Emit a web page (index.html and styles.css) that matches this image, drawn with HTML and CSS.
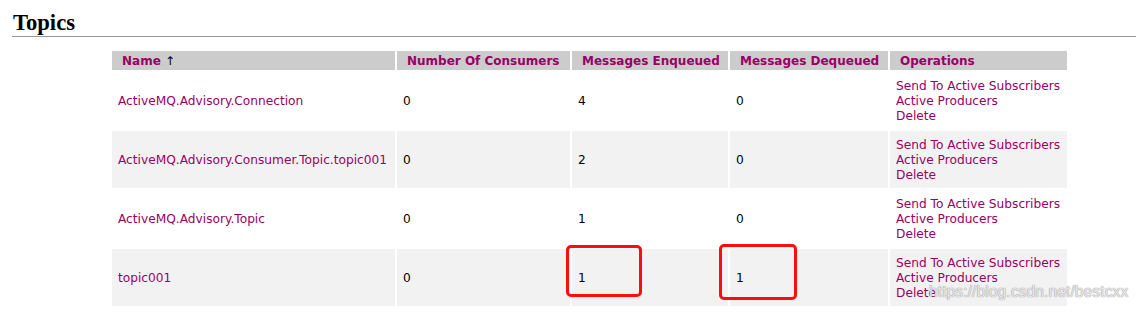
FILE: index.html
```html
<!DOCTYPE html>
<html>
<head>
<meta charset="utf-8">
<link rel="stylesheet" href="styles.css">
</head>
<body>
<div class="page">
  <h2 class="section-title">Topics</h2>
  <table class="topics">
    <colgroup>
      <col class="c-name"><col class="c-cons"><col class="c-enq"><col class="c-deq"><col class="c-ops">
    </colgroup>
    <thead>
      <tr>
        <th>Name <span class="arrow">↑</span></th>
        <th>Number Of Consumers</th>
        <th>Messages Enqueued</th>
        <th>Messages Dequeued</th>
        <th>Operations</th>
      </tr>
    </thead>
    <tbody>
      <tr>
        <td><a href="#">ActiveMQ.Advisory.Connection</a></td>
        <td>0</td>
        <td>4</td>
        <td>0</td>
        <td class="ops"><a href="#">Send To Active Subscribers</a><a href="#">Active Producers</a><a href="#">Delete</a></td>
      </tr>
      <tr class="alt">
        <td><a href="#">ActiveMQ.Advisory.Consumer.Topic.topic001</a></td>
        <td>0</td>
        <td>2</td>
        <td>0</td>
        <td class="ops"><a href="#">Send To Active Subscribers</a><a href="#">Active Producers</a><a href="#">Delete</a></td>
      </tr>
      <tr>
        <td><a href="#">ActiveMQ.Advisory.Topic</a></td>
        <td>0</td>
        <td>1</td>
        <td>0</td>
        <td class="ops"><a href="#">Send To Active Subscribers</a><a href="#">Active Producers</a><a href="#">Delete</a></td>
      </tr>
      <tr class="alt">
        <td><a href="#">topic001</a></td>
        <td>0</td>
        <td class="marked"><span class="mark mark-enq"></span>1</td>
        <td class="marked"><span class="mark mark-deq"></span>1</td>
        <td class="ops"><a href="#">Send To Active Subscribers</a><a href="#">Active Producers</a><a href="#">Delete</a></td>
      </tr>
    </tbody>
  </table>
  <div class="watermark">https://blog.csdn.net/bestcxx</div>
</div>
</body>
</html>
```

FILE: styles.css
```css
html, body {
  margin: 0;
  padding: 0;
  background: #fff;
}

.page {
  position: relative;
  width: 1136px;
  height: 316px;
  overflow: hidden;
  padding-left: 12px;
  box-sizing: border-box;
}

.section-title {
  margin: 0;
  padding: 12px 0 2px 1px;
  font-family: "Liberation Serif", "DejaVu Serif", serif;
  font-size: 22.6px;
  line-height: 22px;
  font-weight: bold;
  color: #000;
  border-bottom: 1px solid #999;
}

.topics {
  margin: 12px 0 0 98px;
  width: 959px;
  table-layout: fixed;
  border-collapse: separate;
  border-spacing: 2px;
  font-family: "DejaVu Sans", Verdana, sans-serif;
  font-size: 12.2px;
  color: #000;
}

.c-name { width: 283px; }
.c-cons { width: 173px; }
.c-enq { width: 156px; }
.c-deq { width: 158px; }
.c-ops { width: 177px; }

.topics th {
  background: #cccccc;
  color: #990066;
  font-weight: bold;
  font-size: 12px;
  text-align: left;
  height: 19px;
  box-sizing: border-box;
  padding: 2px 0 0 10px;
  line-height: 17px;
  white-space: nowrap;
}

.topics th .arrow {
  color: #000;
  font-weight: normal;
}

.topics td {
  height: 57px;
  box-sizing: border-box;
  padding: 2px 0 0 6px;
  vertical-align: middle;
  line-height: 15px;
  white-space: nowrap;
}

.topics tr.alt td {
  background: #f2f2f2;
}

.topics a {
  color: #990066;
  text-decoration: none;
}

.topics td.ops a {
  display: block;
}

.topics td.marked {
  position: relative;
}

.mark {
  position: absolute;
  border: 3px solid #ff0d0d;
  border-radius: 5px;
  box-sizing: border-box;
}

.mark-enq {
  left: -6px;
  top: -4px;
  width: 76px;
  height: 52px;
}

.mark-deq {
  left: -11px;
  top: -5px;
  width: 78px;
  height: 56px;
}

.watermark {
  position: absolute;
  left: 929px;
  top: 283px;
  font-family: "Liberation Sans", Arial, sans-serif;
  font-size: 15.8px;
  color: rgba(255, 255, 255, 0.75);
  text-shadow: 0 0 1px #999, 0 0 1px #999;
}
```
